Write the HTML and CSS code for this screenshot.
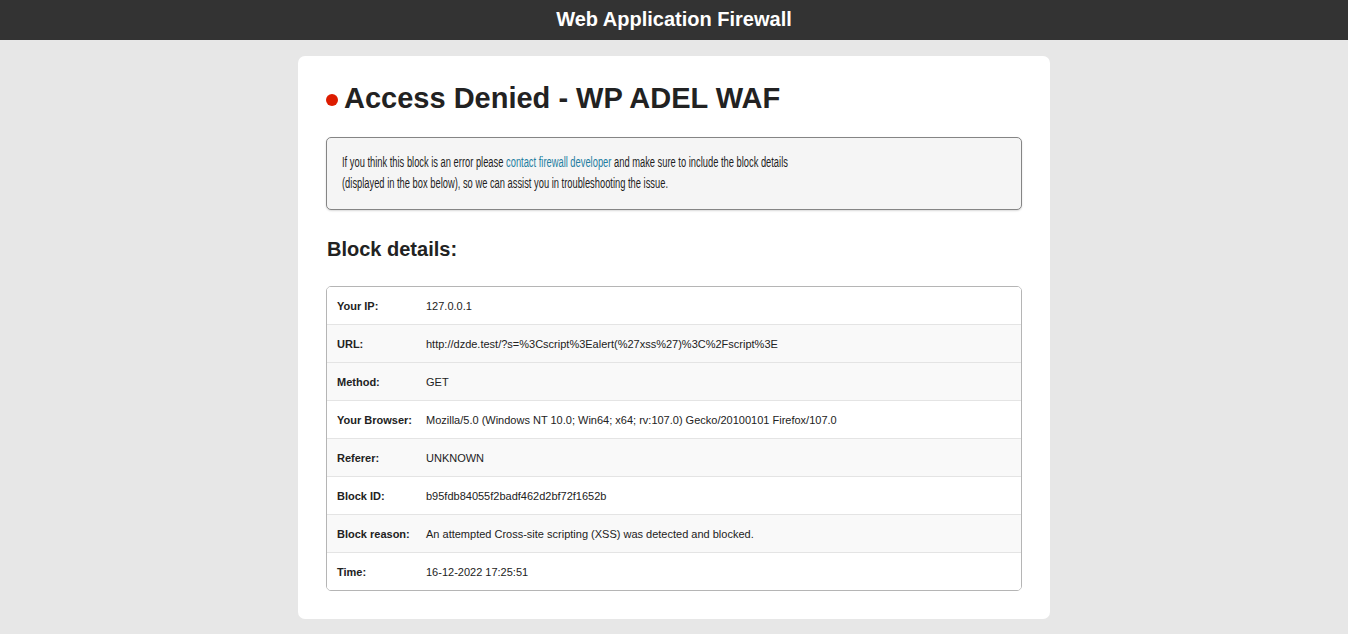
FILE: index.html
```html
<!DOCTYPE html>
<html lang="en">
<head>
<meta charset="utf-8">
<title>Access Denied - WP ADEL WAF</title>
<link rel="stylesheet" href="styles.css">
</head>
<body>
<header class="topbar">Web Application Firewall</header>
<main class="card">
  <h1 class="title"><span class="dot"></span>Access Denied - WP ADEL WAF</h1>
  <div class="notice"><div class="notice-text">If you think this block is an error please <a href="#" class="link">contact firewall developer</a> and make sure to include the block details<br>(displayed in the box below), so we can assist you in troubleshooting the issue.</div></div>
  <h2 class="subtitle">Block details:</h2>
  <div class="details">
    <div class="row"><div class="label">Your IP:</div><div class="value">127.0.0.1</div></div>
    <div class="row alt"><div class="label">URL:</div><div class="value">http://dzde.test/?s=%3Cscript%3Ealert(%27xss%27)%3C%2Fscript%3E</div></div>
    <div class="row alt"><div class="label">Method:</div><div class="value">GET</div></div>
    <div class="row"><div class="label">Your Browser:</div><div class="value">Mozilla/5.0 (Windows NT 10.0; Win64; x64; rv:107.0) Gecko/20100101 Firefox/107.0</div></div>
    <div class="row alt"><div class="label">Referer:</div><div class="value">UNKNOWN</div></div>
    <div class="row"><div class="label">Block ID:</div><div class="value">b95fdb84055f2badf462d2bf72f1652b</div></div>
    <div class="row alt"><div class="label">Block reason:</div><div class="value">An attempted Cross-site scripting (XSS) was detected and blocked.</div></div>
    <div class="row"><div class="label">Time:</div><div class="value">16-12-2022 17:25:51</div></div>
  </div>
</main>
</body>
</html>
```
FILE: styles.css
```css
html, body {
  margin: 0;
  padding: 0;
}
body {
  background: #e7e7e7;
  font-family: "Liberation Sans", Arial, sans-serif;
  color: #222;
}
.topbar {
  height: 40px;
  background: #333333;
  color: #fff;
  font-weight: bold;
  font-size: 20px;
  line-height: 38px;
  text-align: center;
}
.card {
  width: 696px;
  margin: 16px auto 0;
  background: #fff;
  border-radius: 7px;
  padding: 24px 28px 28px;
}
.title {
  margin: 0;
  font-size: 29px;
  line-height: 36px;
  font-weight: bold;
  color: #222;
  display: flex;
  align-items: center;
}
.dot {
  width: 12px;
  height: 12px;
  border-radius: 50%;
  background: #dd1c00;
  margin: 4px 6px 0 0;
  flex: none;
}
.notice {
  margin-top: 21px;
  background: #f5f5f5;
  border: 1px solid #858585;
  border-radius: 5px;
  box-shadow: 0 1px 2px rgba(0,0,0,0.15);
  padding: 14px 15px 15px;
  font-size: 14px;
  line-height: 21px;
  color: #1e1e1e;
}
.notice-text {
  width: 980px;
  transform: scaleX(0.667);
  transform-origin: left center;
}
.link {
  color: #1f7ea1;
  text-decoration: none;
}
.subtitle {
  margin: 27px 0 0;
  font-size: 20px;
  line-height: 24px;
  font-weight: bold;
  color: #222;
  padding-left: 1px;
}
.details {
  margin-top: 25px;
  border: 1px solid #b5b5b5;
  border-radius: 5px;
  overflow: hidden;
  font-size: 11px;
  color: #222;
}
.row {
  display: grid;
  grid-template-columns: 99px 1fr;
  align-items: center;
  height: 37px;
  background: #fff;
  border-top: 1px solid #e4e4e4;
}
.row:first-child {
  border-top: none;
}
.row.alt {
  background: #f9f9f9;
}
.label {
  font-weight: bold;
  padding-left: 10px;
}
.value {
  padding-right: 10px;
}
```
